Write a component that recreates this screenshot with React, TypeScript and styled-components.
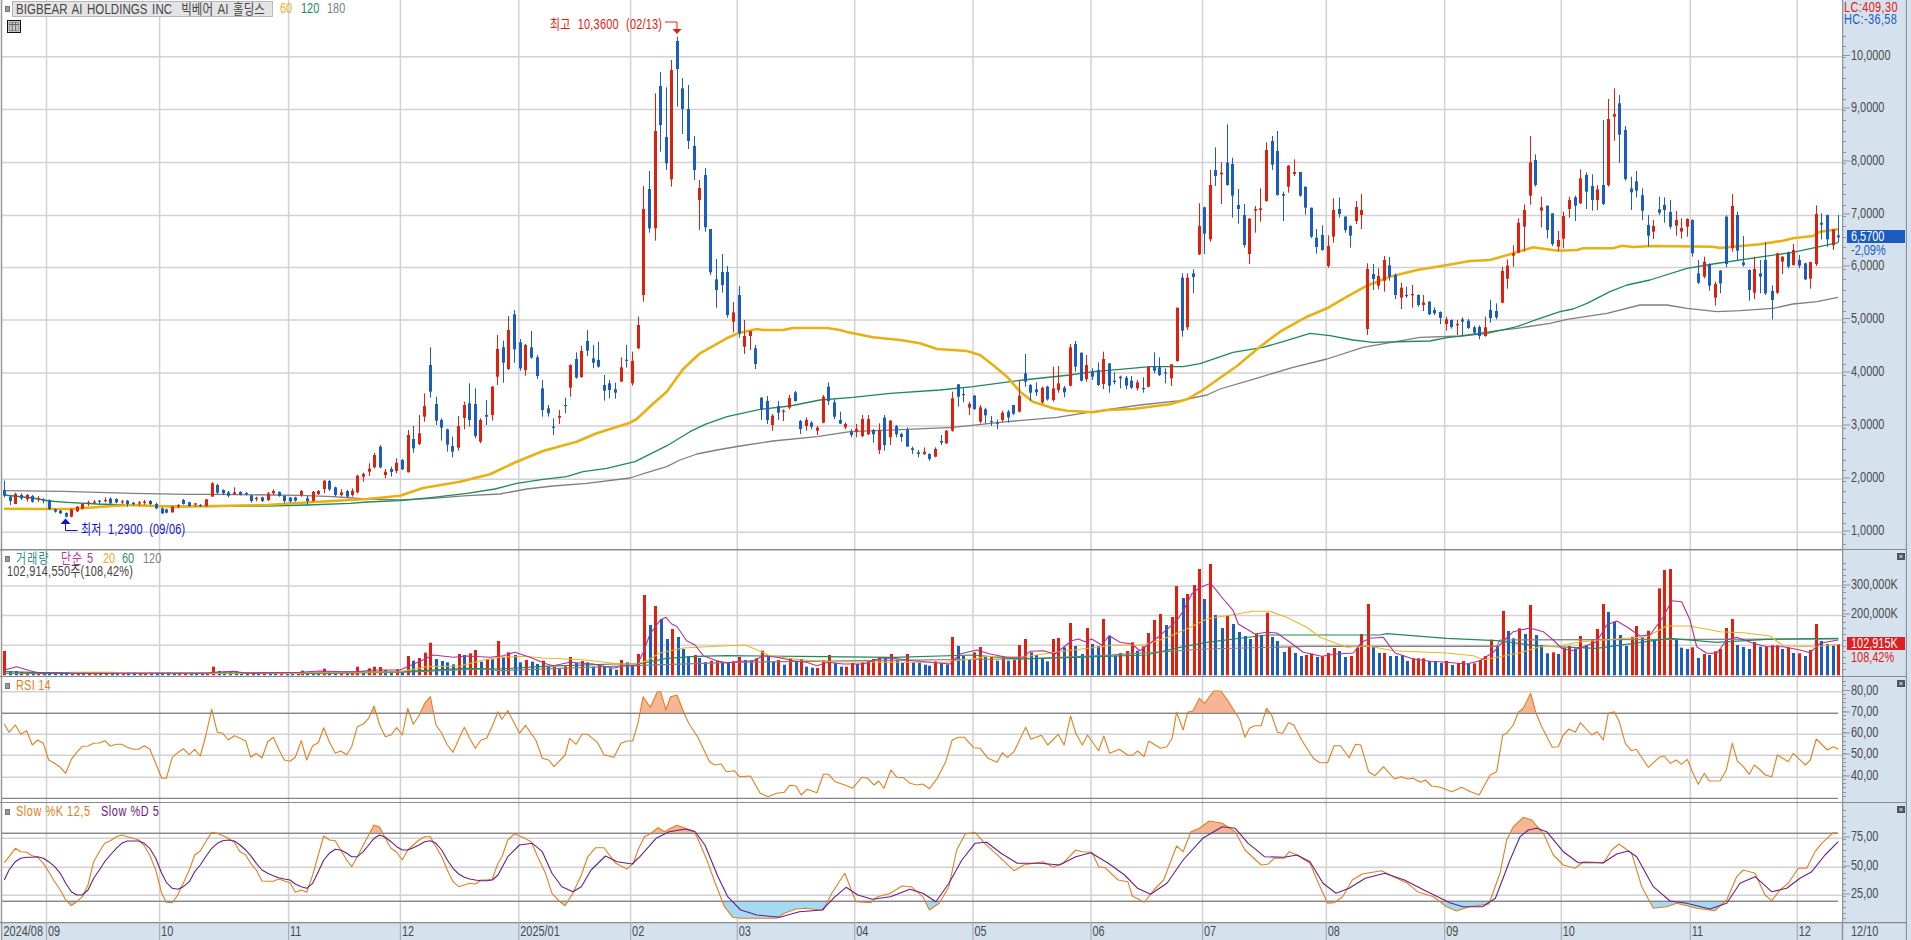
import React, { FC } from "react";
import styled, { createGlobalStyle } from "styled-components";

const RED = "#e0200f";
const BLUE = "#1a5cc0";
const GRID = "#d2d2d6";
const DARK = "#85858a";
const AXIS_BG = "#d5e1ec";
const PLOT_W = 1842;
const CHART_FONT = `"Liberation Sans", "Noto Sans CJK KR", sans-serif`;
const SQUEEZE = 0.78; // the chart's bitmap font is much narrower than anything installed

// month lines, in page pixels
const MONTHS = [46.5, 159.6, 288.6, 400.4, 518.8, 630.6, 737.3, 854.7, 973, 1091, 1202.5, 1326.3, 1444.7, 1561.3, 1690.3, 1797.3];
const MONTH_LABELS = ["09", "10", "11", "12", "2025/01", "02", "03", "04", "05", "06", "07", "08", "09", "10", "11", "12"];

interface Candle { x: number; up: boolean; top: number; bot: number; hi: number; lo: number }
interface Bar { x: number; up: boolean; top: number }

// rows are read off a crop: colour, x, body top, body bottom, wick top, wick bottom
const candles = (x0: number, y0: number, rows: string): Candle[] =>
    rows.trim().split(/\s+/).map((r) => {
        const [x, top, bot, hi, lo] = r.slice(1).split(",").map(Number);
        return { x: x0 + x / 3, up: r[0] === "r", top: y0 + top / 3, bot: y0 + bot / 3, hi: y0 + hi / 3, lo: y0 + lo / 3 };
    });

const bars = (x0: number, y0: number, rows: string): Bar[] =>
    rows.trim().split(/\s+/).map((r) => {
        const [x, top] = r.slice(1).split(",").map(Number);
        return { x: x0 + x / 3, up: r[0] === "r", top: y0 + top / 3 };
    });

const barSeq = (rows: string): Bar[] =>
    rows.trim().split(/\s+/).map((r, i) => ({ x: (13 + i * 16.93) / 3, up: r[0] === "r", top: 440 + Number(r.slice(1)) / 3 }));

const line = (x0: number, y0: number, sx: number, rows: string): string =>
    rows.trim().split(/\s+/).map((p) => {
        const [x, y] = p.split(",").map(Number);
        return `${(x0 + x / sx).toFixed(1)},${(y0 + y / 3).toFixed(1)}`;
    }).join(" ");

const real = (rows: string) => rows.trim().replace(/\s+/g, " ");

const CANDLES: Candle[] = [
    ...candles(0, 440, `b13,150,167,122,172 b29,170,183,168,195 r46,162,192,158,192 b63,165,175,160,180 r80,165,178,162,185 b97,168,185,165,188
    r113,175,178,168,186 b130,178,181,175,190 b146,180,207,178,210 b164,208,215,206,218 b181,212,220,210,222 b197,219,230,217,232 r214,208,230,206,232
    r230,200,214,198,216 r247,192,206,190,208 r264,187,190,182,198 r281,185,187,180,192 b298,182,185,180,195 r314,180,183,172,187 b331,176,190,172,193
    b349,177,187,175,190 r365,184,187,180,192 b382,182,192,180,200 b399,188,192,186,197 r416,187,190,183,198 r433,185,188,180,194 b449,183,192,180,196
    b467,192,205,188,208 b485,205,220,202,222 b499,208,218,206,220 r517,200,217,198,218 r533,196,200,192,205 b550,180,192,177,194 b568,187,198,185,200
    r584,190,192,190,200 b601,195,198,192,200 r617,178,199,177,200 r635,130,170,126,170 b652,135,158,132,162 b668,150,160,148,165 b685,157,167,153,172
    r703,157,163,142,165 b720,156,164,154,166 b737,159,163,156,166 b752,166,183,163,188 r769,174,177,170,184 b786,172,183,170,186 r803,160,180,156,183
    r820,153,160,148,165 b836,156,168,154,170 b853,168,183,166,190 b870,173,184,171,188 b886,172,182,170,185 r904,153,165,150,170 b920,175,183,168,196
    r938,155,183,153,185 r955,153,162,150,165 r971,122,147,120,160 b988,123,148,120,153 b1006,142,165,140,170 r1022,157,165,148,170 b1040,153,170,150,172
    r1055,152,165,145,170 r1072,107,157,104,160 r1090,102,110,98,125 r1106,86,95,70,108 r1122,45,82,38,85 b1139,20,82,15,85`),
    ...candles(380, 270, `r16,605,615,597,625 b33,597,606,590,620 r49,578,603,565,610 b67,570,598,567,600 r83,495,607,480,607 b100,507,535,468,548 r118,490,522,435,525
    r133,408,440,370,455 b151,285,365,232,383 b169,402,452,380,465 b184,450,473,445,512 b202,478,524,476,545 b217,528,545,500,562 r235,468,533,438,542
    r253,405,444,395,478 b268,400,450,340,470 b286,402,498,355,505 r301,450,515,445,520 b319,435,440,390,465 r337,350,435,348,452 r352,237,320,195,345
    b370,232,278,212,338 r385,180,297,138,300 b403,133,238,120,278 b421,217,295,207,302 r436,225,300,222,317 b454,232,263,183,266 b472,262,318,255,326
    b487,355,420,330,440 b505,415,430,405,440 b520,470,473,445,495 r538,438,443,420,462 b555,405,407,383,430 r571,285,353,283,380 b589,267,323,247,326
    r604,243,321,228,323 b622,213,242,180,258 b640,265,278,225,295 b655,270,290,215,293 b673,345,362,315,392 b688,340,360,330,385 b706,358,368,338,386
    r724,292,335,262,335 b739,269,271,225,293 r757,273,340,245,347 r775,165,235,140,238`),
    ...candles(600, 0, `r130,627,885,558,905 b148,567,685,513,698 r164,393,685,280,722 b181,258,375,216,455 b199,411,490,262,510 r214,210,538,180,560 b232,123,207,110,320
    b247,265,327,234,402 b265,327,423,255,447 b283,438,510,408,540 r298,564,600,540,690 b316,525,682,504,695 b331,687,817,687,825 b349,838,870,777,923
    b367,816,855,762,878 b382,816,945,798,953 r400,937,965,906,997 b418,885,1000,858,1013 r433,1008,1040,960,1062 r451,993,1008,993,1050 b466,1045,1092,1035,1107`),
    ...candles(740, 340, `b64,173,210,172,240 b82,183,240,168,252 r97,227,255,222,272 b115,198,218,183,240 r130,212,215,208,243 r148,174,203,165,208 b166,157,183,153,185
    b181,243,267,240,282 r199,240,258,232,272 b214,248,260,243,268 r232,263,272,258,285 r250,170,248,165,250 b265,140,183,127,195 b283,187,230,178,238
    b301,240,251,215,252 r316,252,262,247,268 b334,275,285,267,292 r349,267,275,252,292 r367,237,288,225,292 r385,237,283,225,285 b400,270,283,267,308
    r418,270,330,250,342 b433,233,315,225,332 r451,242,292,240,315 b469,258,283,255,292 b484,282,291,278,305 b502,270,320,262,320 b517,325,330,320,342
    b535,337,342,330,352 r553,335,342,322,345 b568,342,357,340,362 r586,327,350,322,352 b604,303,308,285,315 r619,272,310,270,312 r637,175,272,155,275
    b653,133,170,132,200 b670,162,165,145,187 r688,192,203,185,225 b703,167,207,165,210 r721,202,245,195,250 b736,208,226,203,250 b754,243,246,228,258
    b772,248,251,238,267 r787,218,240,212,246 b805,215,232,210,248 b820,195,221,195,225 r838,167,215,120,217 b856,100,125,42,140 b871,135,158,132,183
    b889,148,157,127,168 r907,143,187,140,192 b922,140,178,137,182 r940,145,180,80,185 r955,130,150,78,158 b973,143,157,138,172 r991,22,137,12,140
    b1006,12,80,3,95 b1024,38,122,38,125 r1039,75,117,45,125 b1057,95,110,85,120 b1075,90,135,67,138 r1090,57,132,35,147 b1108,70,137,70,158
    b1123,122,126,97,133 b1141,110,115,107,145 b1159,113,137,108,148 b1174,122,143,108,147 r1192,127,145,120,152 b1210,144,146,112,158 r1225,80,140,78,142
    b1243,78,92,37,100 b1258,82,105,52,108 b1276,97,100,85,130 r1294,73,115,72,138`),
    ...candles(1150, 120, `r80,563,723,563,725 b97,473,632,460,650 r112,473,622,460,630 b130,460,471,448,520 r148,318,403,250,405 b163,262,341,260,402 r181,195,358,150,365
    b196,150,168,82,198 r214,158,163,127,252 b232,128,195,13,197 b247,132,227,113,293 b265,255,267,207,311 b283,285,375,252,383 r298,296,402,294,432
    r316,267,272,258,338 r331,265,270,205,305 r349,90,243,67,245 b367,63,134,48,150 b382,93,225,33,227 b400,222,227,215,303 r415,137,200,135,218
    r433,156,162,118,168 b451,156,227,156,230 b466,200,263,200,284 b484,263,350,263,354 b499,353,381,327,401 b517,345,390,316,392 r535,378,438,346,443
    r550,270,350,235,368 b568,267,282,232,293 b586,290,330,288,338 b601,318,347,316,383 r619,261,303,243,312 r634,270,285,222,327 r652,447,627,430,645
    b670,462,477,432,510 r685,468,497,445,508 r703,420,482,408,515 b718,436,470,411,482 b736,465,525,460,537 r754,503,533,488,567 b769,525,528,500,533
    r787,522,526,495,563 b805,525,555,523,560 r820,547,555,525,573 b838,545,583,543,585 b853,570,580,562,585 b871,576,594,574,612 r889,598,612,590,632
    b904,600,621,598,626 r922,612,616,600,645 b937,598,605,592,648 b955,602,624,597,627 b973,622,638,617,645 b988,621,648,616,658 r1006,622,648,590,650
    b1021,570,594,540,608 b1039,573,592,550,598 r1057,453,548,440,550 r1072,437,476,418,506 r1090,400,407,376,440 r1105,308,398,295,400 r1123,270,320,253,395
    r1141,127,227,48,254 b1156,120,195,103,200 r1174,262,272,230,322`),
    ...candles(1500, 0, `b142,617,690,617,715 b157,640,732,640,738 r175,720,740,693,752 r190,648,716,635,745 r207,600,627,590,653 b226,592,617,587,663 r241,535,610,508,612
    b259,525,575,517,627 b275,558,600,523,632 r292,568,600,556,630 b310,555,612,360,615 r325,357,555,297,560 r343,342,350,265,422 b358,310,404,285,488
    b376,390,537,378,542 b394,565,577,530,630 b409,544,572,513,592 b427,586,632,565,660 b445,675,707,645,740 r460,678,695,660,717 b478,628,638,590,645
    b493,615,630,592,668 b511,636,680,600,687 r529,660,677,633,707 r544,684,695,655,716 r562,657,680,655,710 b577,660,760,658,770 b595,820,848,780,852
    r613,785,830,770,835 b628,792,857,790,872 r646,852,893,845,917 b661,812,850,810,880 b679,650,792,646,802 r697,618,745,582,755 b712,645,752,635,782
    b730,787,795,708,800 b748,810,870,808,902 r763,807,878,770,897 b781,820,830,780,880 b796,780,880,727,885 b815,873,900,856,958 r832,760,878,758,882
    r847,770,785,768,822 b865,757,800,755,805 r880,750,795,732,797 b898,780,797,765,805 b916,790,838,788,840 r931,786,836,785,866 r949,642,792,616,798
    b964,668,674,640,718 b982,645,718,644,740 r1000,688,736,688,750 b1015,706,712,645,727`),
];

const MA60 = real(`4,508.7 48,509 70,509 85,508 105,506.5 130,505 155,506 175,506.7 212,506 267,505 310,502.3 350,500 367,499 400,495.7 423,488 460,481.7 490,474.3 516.7,461.7
543,451 576.7,441.7 596.7,433.3 630,422.7 636.7,419 651.7,405 666.7,391.7 683,369.3 700,353.3 726.7,338.3 738,333.3 756.7,329 763,330 783,330 793,328 827,328 840,330 847,332 873,337.3
900,340 920,343.3 937,349 967,351 980,355 993,365 1007,376.7 1020,391.7 1033,401.7 1053,408.3 1067,410.7 1093,412.3 1107,410 1133,409 1150,406.7 1170,404.3 1187,399.3 1203,390
1217,380 1237,366 1260,346.7 1280,331.7 1307,316.7 1327,308.3 1347,296.7 1367,285.7 1390,276.7 1417,270 1443,265.7 1470,261 1490,260 1510,254.3 1533,247.3 1558,250.7 1577,250
1583,248.3 1613,248.3 1622,245.7 1633,247 1653,246 1713,246.7 1720,248 1733,246.7 1760,244.3 1783,240.7 1793,238.3 1813,236 1820,231.7 1838,229.3`);

const MA120 = real(`4,495 33,498 49,501 67,502.3 97,504 157,506 207,506.7 267,506 307,505 350,503.3 367,502 400,500.7 433,497.3 467,493.3 495,489 516.7,483.3 543,479.3 566.7,476.7 583,471.7
606.7,468.3 635,461.7 653,452.7 667,445.7 690,431.7 705,424.3 727,416.7 760,409.3 790,406 820,400 853,397.3 890,393.3 940,390 973,386.7 1023,380 1070,375 1093,371.7 1120,369.3
1150,366.7 1183,366.7 1200,363.7 1233,352.3 1263,347.3 1283,341.7 1310,333.3 1330,335.7 1353,340 1373,342.3 1430,341 1447,337.7 1487,333.3 1517,326.7 1537,319.3 1560,311.7
1573,309 1587,303.3 1610,291.7 1627,285 1650,280 1687,268.3 1713,264 1763,256.7 1793,252.3 1838,242.7`);

const MA180 = real(`4,490.7 63,491.3 133,493.3 187,494.3 213,494.3 300,495.3 333,496.7 367,499 400,500 433,498.3 467,495.7 500,494 526.7,489 553,486 586.7,483.3 630,478 650,471.7 666.7,466.7
680,460 697,454 717,450 740,446 773,441 817,436.7 850,431.7 907,429.3 953,427.3 1007,421.7 1057,417.3 1093,411.7 1140,405 1180,400.7 1207,395 1220,389 1253,379.3 1293,367.3
1327,359 1363,347.3 1420,337.3 1460,336 1497,330.7 1517,328.3 1550,323.3 1567,319.3 1607,313.3 1640,305 1667,305 1687,308.3 1717,311.7 1740,310.7 1773,308.3 1793,304 1817,301.7 1838,297.3`);

const VOLUME: Bar[] = [
    ...barSeq(`r633 b693 b693 r696 r697 b697 r698 b698 b696 b697 b697 b698 b698 r698 b698 r699 r699 b698 r699 b698 b698 r699 b698 b698 r699 r699 b698 b698 b698 b698 b699 r699 r699 b699
    b699 b699 r699 r680 b693 b695 b696 b693 b697 b697 r697 b697 r696 b697 b698 r698 b698 b698 b698`),
    ...bars(0, 440, `r905,692 b920,697 b938,698 b955,696 r971,686 b988,695 b1005,697 r1022,696 b1040,697 r1055,695 r1072,680 b1090,695 r1106,685 r1122,680 r1139,681 b1156,690 b1173,695 r1190,688
    b1207,695 r1223,648 b1240,662 r1257,654 r1274,638 r1291,608 b1308,657 b1325,663 b1342,667 b1359,673 r1376,642 b1393,645 r1409,640 r1426,630 b1443,665 r1460,657 b1477,658 r1494,603`),
    ...bars(500, 549, `b10,325 r25,310 b44,318 b61,340 r77,333 b95,338 b112,345 r128,335 b145,353 r161,354 b178,357 r195,352 r211,324 b229,342 r245,336 b262,340 b280,353 r296,346 b313,354 b330,358
    b347,362 r364,333 b380,340 b397,350 r415,315 r431,138 b449,228 r464,171 b482,210 b500,270 r515,240 b533,264 b548,300 b565,322 r584,318 b598,327 b616,339 r632,335 r650,335 b667,338 b684,340
    r700,337 r718,324 b735,333 b752,334 r767,328 r785,305 b803,320 b818,339 r835,333 b852,347 r869,328 b887,338 r902,330 b919,353 b935,356 r952,357 r970,333 r986,318 b1004,342 b1022,353
    r1037,353 r1055,342 b1070,345 r1087,340 r1105,335 r1120,330 r1138,325 b1155,325 r1172,315 b1190,332 b1205,342 r1222,315 b1238,340 b1256,342 b1274,347 b1288,350 r1306,337 b1324,343
    b1340,346 r1357,264 b1373,291 b1390,320 b1408,332 r1423,310 r1441,294 b1456,322 r1474,322 b1492,335 r1508,322 b1525,335 r1542,333`),
    ...bars(1000, 549, `r58,288 r75,270 b92,310 b109,318 b127,328 b142,337 r160,270 r175,267 b193,295 r211,222 b226,291 b245,315 r260,237 b277,285 b295,291 r310,210 b328,260 b344,320 r361,312 r380,306
    r395,280 b412,305 r430,292 r445,252 r463,213 r479,195 b497,228 r515,204 r529,111 b548,147 r562,135 r581,108 r598,60 b613,150 r631,45 b646,198 b665,237 r682,200 b698,225 b716,249 b734,261
    b749,270 r767,254 b782,258 r800,191 b817,264 b832,276 b851,309 r866,294 b884,312 b902,321 r917,318 r934,314 b950,324 r967,322 r985,312 r1001,297 b1018,306 b1036,324 r1052,321 r1070,296
    r1084,255 r1103,165 b1120,293 b1136,312 r1153,312 b1170,321 b1187,321 b1205,318 b1220,336 r1238,328 r1253,328 r1270,328 b1288,336 b1304,336 b1322,342 r1339,336 b1355,348 r1373,342
    r1388,336 b1405,344 r1423,343 r1440,333 r1456,321 r1472,272 b1490,291`),
    ...bars(1500, 540, `r8,213 b23,273 b40,295 r57,265 b74,282 r91,195 b107,285 b124,315 b142,340 r158,337 b175,342 r191,323 r208,318 b225,325 r241,288 b259,317 r275,298 r292,267 r310,192 b325,216 b343,245 b360,285
    b378,318 r395,290 r409,258 b427,292 r445,272 b461,302 r478,145 r493,90 r511,87 b529,297 b544,323 b562,327 r577,322 b595,354 r613,342 b628,345 r646,334 r661,327 r679,264 r697,237 b712,315
    b730,321 b748,327 r763,306 b781,320 r799,320 r815,316 r832,316 b847,327 r865,322 b880,339 r898,340 b916,348 r931,330 r949,252 b964,303 b982,312 b1000,317 r1015,313`),
];

const VOL5 = [
    line(0, 440, 3, "13,690 50,680 90,692 120,700 620,700 640,697 700,694 740,700 900,697 960,693 1030,695 1070,695 1120,690 1200,690 1230,677 1280,655 1300,645 1360,652 1400,648 1470,652"),
    line(500, 549, 3, `10,320 45,310 90,325 140,345 160,350 210,340 280,345 340,358 370,350 410,350 430,310 450,255 482,212 498,205 515,225 530,232 560,275 585,288 610,320 650,335 680,342 720,337 760,335 790,320 830,325
    880,335 920,340 950,350 985,340 1030,345 1090,345 1140,328 1180,328 1240,335 1290,340 1350,345 1380,315 1430,303 1470,315 1520,325`),
    line(1000, 549, 3, `70,325 90,307 130,305 165,315 215,275 235,270 255,278 275,270 305,288 328,260 360,280 395,285 420,305 440,290 480,260 530,215 550,185 575,135 600,115 632,103 670,150 700,185 715,225 765,255 800,250 830,252
    870,280 910,310 965,322 1010,315 1060,312 1085,280 1110,268 1150,265 1185,312 1240,330 1290,337 1340,340 1400,345 1440,335 1480,310`),
    line(1500, 540, 3, "8,305 40,275 90,264 130,275 160,300 185,325 215,332 250,320 290,305 320,255 350,243 380,260 420,288 450,285 490,230 515,182 545,185 570,240 590,320 620,340 650,340 680,300 710,292 760,310 800,320 850,320 900,330 930,338 960,310 1015,300"),
].join(" ");
const VOL20 = [
    line(0, 440, 3, "210,697 340,697 360,700 900,700 930,697 1070,697 1200,695 1280,680 1380,678 1450,660"),
    line(500, 549, 3, "0,325 70,322 130,327 250,332 360,345 410,345 440,335 480,312 550,297 620,293 735,288 770,302 810,320 900,332 1000,338 1180,340 1340,340 1360,335 1420,330 1460,322 1530,325"),
    line(1000, 549, 3, "60,325 110,318 200,305 290,295 340,288 430,288 490,270 560,240 620,210 680,200 760,187 810,187 860,205 920,235 960,265 1040,295 1100,290 1180,305 1340,312 1420,320 1450,332 1490,325"),
    line(1500, 540, 3, "0,350 60,338 120,320 180,318 240,305 340,298 440,290 500,258 570,258 660,275 730,278 810,288 850,318 940,320 1015,313"),
].join(" ");
const VOL60 = [
    line(0, 440, 3, "13,695 120,698 340,700 900,698 1200,695 1400,685"),
    line(500, 549, 3, "0,360 130,352 340,345 415,345 500,328 590,322 680,320 900,322 1180,325 1420,318 1530,328"),
    line(1000, 549, 3, "60,330 230,325 440,318 540,295 620,280 800,258 1140,258 1160,254 1340,268 1490,275"),
    line(1500, 540, 3, "120,318 290,325 510,295 650,307 800,298 1015,295"),
].join(" ");
const VOL120 = [
    line(0, 440, 3, "13,700 1000,700 1200,697 1450,687"),
    line(500, 549, 3, "0,365 400,350 700,340 1100,335 1530,330"),
    line(1000, 549, 3, "60,330 300,320 620,300 920,292 1490,292"),
    line(1500, 540, 3, "0,300 1015,297"),
].join(" ");

const RSI = [
    line(0, 680, 3, `13,132 27,157 46,135 62,163 80,152 97,195 113,180 130,190 146,240 164,250 181,262 197,280 214,238 230,217 247,199 264,198 281,190 298,189 314,182 331,198 349,193 365,193 382,202 399,208 416,208 433,197 449,207
    467,250 485,295 499,295 517,232 533,218 550,206 568,224 584,208 601,228 617,168 635,88 652,157 668,160 685,180 703,167 720,175 737,183 752,232 769,220 786,234 803,185 820,172 836,208 853,240 870,244 886,232 904,182 920,240
    938,197 955,188 971,143 988,185 1006,220 1022,213 1040,224 1055,200 1072,140 1090,132 1106,115 1122,78 1139,135 1156,170 1173,165 1190,143 1207,165 1223,85 1240,133 1257,107 1274,70 1291,50 1308,135 1325,160 1342,195 1359,217
    1376,178 1393,142 1409,175 1426,205 1443,180 1460,175 1477,138`),
    line(500, 680, 1.537, `-3,95 3,118 12,92 30,160 39,136 55,180 65,235 75,240 83,260 100,225 107,175 117,193 126,163 135,163 150,188 160,225 175,232 186,190 195,183 204,183 212,130 220,50 231,82 242,35 247,35 255,90 262,50 272,45 283,100
    290,130 305,175 322,245 330,255 340,252 348,275 360,272 368,290 385,288 400,340 412,350 425,340 437,337 445,316 455,318 463,345 472,328 487,338 497,283 505,283 515,305 530,315 542,325 556,292 565,295 575,315 582,303 590,325
    601,270 610,292 620,293 630,310 640,315 650,312 660,326 672,295 685,245 695,180 705,172 714,172 728,203 738,205 750,235 764,247 772,218 780,232 790,215 808,142 816,178 832,166 842,195 858,163 867,195 877,108 885,160 895,195
    903,165 920,212 928,168 937,220 952,208 965,226 972,226 980,213 990,230 997,183 1015,205 1025,200 1033,175 1040,97 1050,150 1057,97 1065,92 1075,55 1083,70 1097,33 1108,33 1118,60 1130,97 1137,120 1145,172 1152,145 1160,137
    1170,137 1178,85 1186,105 1195,157 1203,160 1212,128 1220,135 1232,180 1250,235 1260,248 1272,248 1282,197 1292,197 1305,233 1315,193 1323,195 1335,275 1345,287 1358,260 1375,297 1385,290 1395,297 1403,295 1415,307 1422,300
    1432,318 1445,322 1463,335 1478,322 1492,335 1505,345 1522,285 1532,275`),
    line(1500, 540, 3, `8,585 20,580 40,555 55,517 70,505 92,460 108,520 125,560 157,622 175,620 190,585 207,567 226,577 241,548 275,585 292,575 310,600 325,520 343,515 358,545 376,610 394,632 409,628 445,682 478,652 493,648 511,670 529,660
    544,673 562,658 577,695 595,733 613,700 628,723 661,722 679,690 697,610 712,663 730,680 748,703 763,675 781,690 796,705 815,710 832,645 865,665 880,640 916,675 931,660 949,597 982,630 1000,620 1015,628`),
].join(" ");

const SLOW_K = [
    line(0, 680, 3, `13,548 27,530 46,505 62,515 80,517 97,527 113,532 130,550 146,575 164,605 181,630 197,660 214,677 230,665 247,650 264,615 281,545 298,515 314,490 331,482 349,470 365,465 382,470 399,475 416,480 433,497 449,525
    467,570 485,640 499,667 517,668 533,645 550,610 568,570 584,525 601,513 617,485 635,457 652,460 668,467 685,475 703,487 720,515 737,525 752,550 769,570 786,603 803,604 820,604 836,597 853,603 870,608 886,637 904,630 920,637
    938,585 955,525 971,468 988,480 1006,482 1022,510 1040,540 1055,560 1072,530 1090,495 1106,465 1122,435 1139,442 1156,475 1173,505 1190,517 1207,540 1223,510 1240,495 1257,480 1274,470 1291,470 1308,500 1325,530 1342,570
    1359,605 1376,620 1393,615 1409,610 1426,612 1443,600 1460,600 1477,597 1494,550`),
    line(500, 680, 1.537, `3,530 12,480 22,462 35,472 48,485 58,530 70,580 80,640 92,665 100,677 112,640 125,585 135,530 147,503 160,503 170,530 178,550 195,567 205,550 212,510 222,470 232,460 243,443 253,455 262,445 272,436 285,445 298,453 305,480
    318,540 330,605 345,680 358,712 370,715 425,715 437,700 455,687 470,685 482,688 497,690 510,640 530,580 547,665 570,668 580,650 600,640 618,618 632,620 650,650 660,690 675,670 690,620 702,510 715,462 730,457 745,490 770,535
    790,572 805,555 820,550 835,545 850,562 865,550 885,510 895,515 910,517 920,560 930,563 950,600 965,605 972,648 990,667 1005,630 1020,600 1040,498 1050,515 1062,455 1075,445 1090,423 1110,430 1130,455 1145,510 1170,555
    1180,553 1190,535 1205,535 1213,515 1225,525 1245,550 1258,610 1272,670 1282,668 1295,650 1310,600 1325,582 1355,572 1375,592 1395,610 1410,635 1435,650 1455,680 1470,693 1490,680 1520,672`),
    line(1500, 540, 3, `0,1000 20,900 40,860 70,832 95,840 130,880 160,945 190,975 225,985 250,965 285,967 310,970 335,930 357,912 395,940 425,1040 460,1105 500,1100 530,1090 590,1105 645,1112 680,1080 710,1010 730,990 765,1000 795,1065
    815,1082 840,1050 865,1030 895,985 920,985 945,935 965,910 1000,878 1015,880`),
].join(" ");

const SLOW_D = [
    line(0, 680, 3, `13,600 27,570 46,545 62,535 80,532 97,532 113,530 130,535 146,545 164,560 181,580 197,610 214,635 230,645 247,645 264,630 281,595 298,570 314,545 331,525 349,505 365,490 382,483 399,483 416,483 433,490 449,505
    467,535 485,580 499,607 517,625 533,628 550,620 568,605 584,575 601,555 617,530 635,505 652,490 668,482 685,480 703,483 720,495 737,510 752,527 769,550 786,570 803,580 820,587 836,593 853,597 870,600 886,612 904,620 920,625
    938,610 955,575 971,540 988,520 1006,508 1022,510 1040,520 1055,530 1072,530 1090,515 1106,495 1122,475 1139,465 1156,472 1173,485 1190,500 1207,510 1223,510 1240,503 1257,495 1274,485 1291,482 1308,490 1325,510 1342,540
    1359,565 1376,582 1393,592 1409,597 1426,600 1443,602 1460,602 1477,600 1494,585`),
    line(500, 680, 1.537, `12,530 30,495 50,490 65,515 80,580 95,620 112,635 125,620 140,570 162,528 180,545 203,552 215,530 240,475 260,455 285,447 300,455 315,495 335,590 350,650 370,690 395,705 430,712 460,695 495,690 515,650 532,622 550,645
    572,658 600,650 630,628 650,640 670,665 690,610 710,540 730,490 748,487 770,520 795,550 830,550 860,555 885,530 908,518 935,550 960,585 980,625 1000,643 1025,610 1050,540 1080,475 1110,440 1130,445 1150,490 1175,530 1205,532
    1225,525 1245,545 1265,610 1285,640 1305,625 1330,595 1360,580 1390,600 1420,630 1460,668 1480,680 1510,680 1530,655`),
    line(1500, 540, 3, "30,960 60,890 85,870 110,865 140,875 190,935 235,968 310,968 350,942 385,933 410,950 460,1040 510,1083 560,1090 630,1107 680,1090 720,1030 765,1010 815,1055 860,1045 900,1015 935,995 975,945 1015,905"),
].join(" ");

const GlobalStyle = createGlobalStyle`
    html, body { margin: 0; padding: 0; background: #fff; overflow: hidden; }
    #root { width: 1911px; height: 940px; }
`;
const Page = styled.div`
    display: flex;
    flex-direction: column;
    width: 1911px;
    height: 940px;
    font-family: ${CHART_FONT};
`;
const PanelRow = styled.section<{ $h: number }>`
    display: flex;
    height: ${(p) => p.$h}px;
    flex: none;
`;
const Plot = styled.div`
    position: relative;
    width: ${PLOT_W}px;
    flex: none;
    background: #fff;
`;
const AxisColumn = styled.div`
    position: relative;
    flex: 1;
    background: ${AXIS_BG};
    border-right: 4px solid ${AXIS_BG};
    box-sizing: border-box;
`;
const Drawing = styled.svg`
    display: block;
`;
const Legend = styled.div<{ $top: number }>`
    position: absolute;
    left: 5px;
    top: ${(p) => p.$top}px;
    display: flex;
    align-items: center;
    height: 15px;
    font-size: 14px;
    line-height: 15px;
    white-space: nowrap;
`;
const LegendSub = styled.div<{ $top: number }>`
    position: absolute;
    left: 7px;
    top: ${(p) => p.$top}px;
    font-size: 14px;
    line-height: 15px;
    color: #444;
    letter-spacing: 0.3px;
    white-space: nowrap;
    transform: scaleX(${SQUEEZE});
    transform-origin: 0 50%;
`;
const Knob = styled.i<{ $gap?: number }>`
    flex: none;
    width: 5px;
    height: 6px;
    margin-right: ${(p) => p.$gap ?? 6}px;
    background: #9a9a9a;
    border: 1px solid #777;
    box-sizing: border-box;
`;
const TitleBox = styled.div`
    flex: none;
    width: 256px;
    height: 14px;
    margin-right: 7px;
    padding-left: 3px;
    background: #e4e4e4;
    border: 1px solid #b8b8b8;
    line-height: 14px;
    overflow: hidden;
`;
const TitleText = styled.span`
    display: inline-block;
    color: #444;
    font-size: 14px;
    letter-spacing: 0.1px;
    word-spacing: 1.5px;
    white-space: pre;
    transform: scaleX(0.82);
    transform-origin: 0 50%;
`;
const Item = styled.span<{ $c: string; $w: number; $ls?: number }>`
    flex: none;
    width: ${(p) => p.$w}px;
    color: ${(p) => p.$c};
    letter-spacing: ${(p) => p.$ls ?? 0}px;
`;
const ItemText = styled.span`
    display: inline-block;
    transform: scaleX(${SQUEEZE});
    transform-origin: 0 50%;
`;
const GridButton = styled.svg`
    position: absolute;
    left: 7px;
    top: 20px;
`;
const Tag = styled.div<{ $c: string; $top: number; $x: number; $ls?: number; $ws?: number }>`
    position: absolute;
    left: ${(p) => p.$x}px;
    top: ${(p) => p.$top}px;
    color: ${(p) => p.$c};
    font-size: 14px;
    line-height: 14px;
    letter-spacing: ${(p) => p.$ls ?? 0}px;
    word-spacing: ${(p) => p.$ws ?? 0}px;
    white-space: nowrap;
    transform: scaleX(${SQUEEZE});
    transform-origin: 0 50%;
`;
const ValueTag = styled.div<{ $bg: string; $top: number }>`
    position: absolute;
    left: 5px;
    top: ${(p) => p.$top}px;
    width: 54px;
    height: 13px;
    padding-left: 4px;
    background: ${(p) => p.$bg};
    color: #fff;
    font-size: 14px;
    line-height: 13px;
    white-space: nowrap;
`;
const ChartText = styled.text`
    font-family: ${CHART_FONT};
    font-size: 14px;
    fill: #4a4a4a;
    dominant-baseline: central;
`;

// narrow tick text: svg has no font-stretch for these fonts, so squeeze it in place
const Squeezed: FC<{ x: number; y: number; children: string }> = ({ x, y, children }) => (
    <ChartText transform={`translate(${x} ${y}) scale(${SQUEEZE} 1)`}>{children}</ChartText>
);

const GridLines: FC<{ ys: number[]; top: number; h: number; dark?: number[] }> = ({ ys, top, h, dark = [] }) => (
    <>
        {ys.map((y) => <line key={y} x1={2} x2={PLOT_W} y1={y} y2={y} stroke={GRID} strokeWidth={1.5} />)}
        {MONTHS.map((x) => <line key={x} x1={x} x2={x} y1={top} y2={top + h} stroke={GRID} strokeWidth={1.5} />)}
        {dark.map((y) => <line key={y} x1={2} x2={1838} y1={y} y2={y} stroke={DARK} strokeWidth={1.3} />)}
        <line x1={1.5} x2={1.5} y1={top} y2={top + h} stroke="#999" strokeWidth={1.5} />
    </>
);

const PanelTop: FC<{ y: number; x1?: number; x2?: number }> = ({ y, x1 = 0, x2 = PLOT_W }) => (
    <line x1={x1} x2={x2} y1={y} y2={y} stroke="#8a8a8e" strokeWidth={1.6} />
);

const Trace: FC<{ pts: string; c: string; w?: number }> = ({ pts, c, w = 1.1 }) => (
    <polyline points={pts} fill="none" stroke={c} strokeWidth={w} strokeLinejoin="round" />
);

const AxisFrame: FC<{ top: number; h: number; labels: [string, number][]; minor?: number[]; knob?: number }> = ({ top, h, labels, minor = [], knob }) => (
    <Drawing width={65} height={h} viewBox={`1842 ${top} 65 ${h}`}>
        {top > 0 && <PanelTop y={top + 0.3} x1={1842} x2={1907} />}
        <line x1={1842.5} x2={1842.5} y1={top} y2={top + h} stroke="#8f959c" strokeWidth={1.5} />
        <line x1={1906.5} x2={1906.5} y1={top} y2={top + h} stroke="#88929e" strokeWidth={1.3} />
        {minor.map((y) => <line key={y} x1={1843} x2={1846} y1={y} y2={y} stroke="#8f959c" />)}
        {labels.map(([t, y]) => (
            <g key={t}>
                <line x1={1843} x2={1850} y1={y} y2={y} stroke="#8f959c" />
                <Squeezed x={1851} y={y}>{t}</Squeezed>
            </g>
        ))}
        {knob !== undefined && (
            <g>
                <rect x={1897} y={knob - 3.5} width={8} height={7} fill="#4d5560" />
                <path d={`M1899.5 ${knob - 1.5}l3 3m0 -3l-3 3`} stroke="#fff" strokeWidth={0.9} />
            </g>
        )}
    </Drawing>
);

const minorTicks = (from: number, to: number, step: number) => {
    const out: number[] = [];
    for (let y = from; y < to; y += step) out.push(Math.round(y) + 0.5);
    return out;
};

const MainPanel: FC = () => (
    <PanelRow $h={549}>
        <Plot>
            <Drawing width={PLOT_W} height={549} viewBox={`0 0 ${PLOT_W} 549`}>
                <GridLines ys={[56.7, 109.4, 162.4, 215.4, 267.4, 320, 373, 426, 479.3, 532.3]} top={0} h={549} />
                <Trace pts={MA180} c="#7f7f7f" w={1.3} />
                <Trace pts={MA120} c="#1f8a55" w={1.3} />
                <Trace pts={MA60} c="#e8b012" w={2.6} />
                {CANDLES.map((k) => {
                    const x = Math.round(k.x);
                    return (
                        <g key={k.x} fill={k.up ? RED : BLUE}>
                            <rect x={x} y={k.hi} width={1} height={k.lo - k.hi} />
                            <rect x={x - 1} y={k.top} width={3} height={Math.max(k.bot - k.top, 1.2)} />
                        </g>
                    );
                })}
                <path d="M665 22H677V30" fill="none" stroke={RED} strokeWidth={1} />
                <path d="M672.5 29H681.5L677 34Z" fill={RED} />
                <path d="M65.5 518.5L70.5 524H60.5Z" fill="#1010d0" />
                <path d="M65.5 523V530.5H77.5" fill="none" stroke="#1010d0" strokeWidth={1} />
            </Drawing>
            <Legend $top={1}>
                <Knob $gap={2} />
                <TitleBox><TitleText>{"BIGBEAR AI HOLDINGS INC  빅베어 AI 홀딩스"}</TitleText></TitleBox>
                <Item $c="#e0b020" $w={21}><ItemText>60</ItemText></Item>
                <Item $c="#1a8a60" $w={25.5}><ItemText>120</ItemText></Item>
                <Item $c="#808080" $w={24}><ItemText>180</ItemText></Item>
            </Legend>
            <GridButton width={14} height={13} viewBox="0 0 14 13">
                <rect x={0.5} y={0.5} width={13} height={12} fill="#fff" stroke="#111" />
                <rect x={2} y={2} width={10} height={9} fill="#c8c8c8" stroke="#666" strokeWidth={0.8} />
                <path d="M2 4.5H12M5.3 2V11M8.6 2V11" stroke="#555" strokeWidth={0.8} fill="none" />
            </GridButton>
            <Tag $c={RED} $x={550} $top={17} $ls={0.3} $ws={5}>최고 10,3600 (02/13)</Tag>
            <Tag $c="#1010d0" $x={80.5} $top={522} $ls={0.3} $ws={4}>최저 1,2900 (09/06)</Tag>
        </Plot>
        <AxisColumn>
            <AxisFrame
                top={0}
                h={549}
                labels={[["10,0000", 55.5], ["9,0000", 108], ["8,0000", 161], ["7,0000", 214], ["6,0000", 266], ["5,0000", 318.5], ["4,0000", 372], ["3,0000", 425], ["2,0000", 478], ["1,0000", 531]]}
                minor={minorTicks(35.5, 549, 10.6)}
            />
            <Tag $c={RED} $x={1.5} $top={0} $ls={0.5}>LC:409,30</Tag>
            <Tag $c={BLUE} $x={1.5} $top={12} $ls={0.5}>HC:-36,58</Tag>
            <ValueTag $bg={BLUE} $top={230}><ItemText>6,5700</ItemText></ValueTag>
            <Tag $c={BLUE} $x={9} $top={243}>-2,09%</Tag>
        </AxisColumn>
    </PanelRow>
);

const VolumePanel: FC = () => (
    <PanelRow $h={127}>
        <Plot>
            <Drawing width={PLOT_W} height={127} viewBox={`0 549 ${PLOT_W} 127`}>
                <GridLines ys={[586, 615.5, 645.3]} top={549} h={127} />
                <PanelTop y={549.6} />
                {VOLUME.map((b) => (
                    <rect key={b.x} x={Math.round(b.x) - 1} y={b.top} width={3} height={Math.max(675.3 - b.top, 0.5)} fill={b.up ? RED : BLUE} />
                ))}
                <Trace pts={VOL120} c="#808080" w={1.2} />
                <Trace pts={VOL60} c="#1f8a55" w={1.2} />
                <Trace pts={VOL20} c="#e8b820" />
                <Trace pts={VOL5} c="#b030a0" />
            </Drawing>
            <Legend $top={2}>
                <Knob />
                <Item $c="#2a9080" $w={44.7} $ls={1.5}><ItemText>거래량</ItemText></Item>
                <Item $c="#c030a0" $w={42} $ls={1.2}><ItemText>단순 5</ItemText></Item>
                <Item $c="#e0b020" $w={19.3}><ItemText>20</ItemText></Item>
                <Item $c="#1f8f60" $w={21}><ItemText>60</ItemText></Item>
                <Item $c="#808080" $w={24}><ItemText>120</ItemText></Item>
            </Legend>
            <LegendSub $top={15}>102,914,550주(108,42%)</LegendSub>
        </Plot>
        <AxisColumn>
            <AxisFrame top={549} h={127} labels={[["300,000K", 585], ["200,000K", 614]]} minor={minorTicks(563, 675, 5.9)} knob={556.5} />
            <ValueTag $bg="#e02020" $top={88}><ItemText>102,915K</ItemText></ValueTag>
            <Tag $c={RED} $x={9} $top={101}>108,42%</Tag>
        </AxisColumn>
    </PanelRow>
);

const RsiPanel: FC = () => (
    <PanelRow $h={126}>
        <Plot>
            <Drawing width={PLOT_W} height={126} viewBox={`0 676 ${PLOT_W} 126`}>
                <defs>
                    <clipPath id="rsi-over"><rect x={0} y={676} width={PLOT_W} height={37.3} /></clipPath>
                </defs>
                <GridLines ys={[691.7, 734.3, 755.3, 777.3]} top={676} h={126} dark={[713.3, 798.3]} />
                <PanelTop y={676.3} />
                <polygon points={`4,713.3 ${RSI} 1838,713.3`} fill="#f6b594" clipPath="url(#rsi-over)" />
                <line x1={2} x2={1838} y1={713.3} y2={713.3} stroke={DARK} strokeWidth={1.3} />
                <Trace pts={RSI} c="#e08020" />
            </Drawing>
            <Legend $top={2}>
                <Knob />
                <Item $c="#e08020" $w={40} $ls={0.3}><ItemText>RSI 14</ItemText></Item>
            </Legend>
        </Plot>
        <AxisColumn>
            <AxisFrame top={676} h={126} labels={[["80,00", 690.5], ["70,00", 712], ["60,00", 733], ["50,00", 754], ["40,00", 776]]} minor={minorTicks(681, 800, 4.25)} knob={683.5} />
        </AxisColumn>
    </PanelRow>
);

const StochPanel: FC = () => (
    <PanelRow $h={120}>
        <Plot>
            <Drawing width={PLOT_W} height={120} viewBox={`0 802 ${PLOT_W} 120`}>
                <defs>
                    <clipPath id="k-over"><rect x={0} y={802} width={PLOT_W} height={31.3} /></clipPath>
                    <clipPath id="k-under"><rect x={0} y={901.3} width={PLOT_W} height={21} /></clipPath>
                </defs>
                <GridLines ys={[838.3, 867.3, 895.3]} top={802} h={120} dark={[833.3, 901.3]} />
                <PanelTop y={802.3} />
                <polygon points={`4,833.3 ${SLOW_K} 1838,833.3`} fill="#f6b594" clipPath="url(#k-over)" />
                <polygon points={`4,901.3 ${SLOW_K} 1838,901.3`} fill="#a4daf3" clipPath="url(#k-under)" />
                <line x1={2} x2={1838} y1={833.3} y2={833.3} stroke={DARK} strokeWidth={1.3} />
                <line x1={2} x2={1838} y1={901.3} y2={901.3} stroke={DARK} strokeWidth={1.3} />
                <Trace pts={SLOW_K} c="#e08020" />
                <Trace pts={SLOW_D} c="#6a1f80" />
            </Drawing>
            <Legend $top={2}>
                <Knob />
                <Item $c="#e08020" $w={84.7} $ls={0.7}><ItemText>Slow %K 12,5</ItemText></Item>
                <Item $c="#6a2080" $w={64} $ls={0.7}><ItemText>Slow %D 5</ItemText></Item>
            </Legend>
        </Plot>
        <AxisColumn>
            <AxisFrame top={802} h={120} labels={[["75,00", 837], ["50,00", 866], ["25,00", 894]]} minor={minorTicks(810, 920, 5.7)} knob={809.5} />
        </AxisColumn>
    </PanelRow>
);

const TimePanel: FC = () => (
    <PanelRow $h={18}>
        <Drawing width={1907} height={18} viewBox="0 922 1907 18">
            <rect x={0} y={922} width={1907} height={18} fill={AXIS_BG} />
            <rect x={0} y={922} width={1} height={18} fill="#fff" />
            <line x1={1.5} x2={1.5} y1={922} y2={940} stroke="#999" strokeWidth={1.5} />
            <PanelTop y={922.5} x2={1907} />
            {MONTHS.map((x) => <line key={x} x1={x} x2={x} y1={922} y2={940} stroke="#a8adb3" strokeWidth={1.2} />)}
            <line x1={1842.5} x2={1842.5} y1={922} y2={940} stroke="#8f959c" strokeWidth={1.5} />
            <line x1={1906.5} x2={1906.5} y1={922} y2={940} stroke="#88929e" strokeWidth={1.3} />
            <Squeezed x={3.5} y={931.5}>2024/08</Squeezed>
            {MONTHS.map((x, i) => <Squeezed key={x} x={x + 1.5} y={931.5}>{MONTH_LABELS[i]}</Squeezed>)}
            <Squeezed x={1851} y={931.5}>12/10</Squeezed>
        </Drawing>
        <AxisColumn />
    </PanelRow>
);

const App: FC = () => (
    <>
        <GlobalStyle />
        <Page>
            <MainPanel />
            <VolumePanel />
            <RsiPanel />
            <StochPanel />
            <TimePanel />
        </Page>
    </>
);

export default App;
